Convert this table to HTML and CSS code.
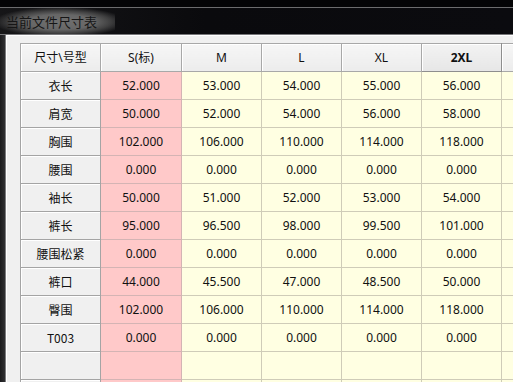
FILE: index.html
```html
<!DOCTYPE html>
<html lang="zh">
<head>
<meta charset="utf-8">
<link rel="stylesheet" href="styles.css">
</head>
<body>
<div class="window">
  <div class="frame-top"></div>
  <div class="titlebar"><span class="title">当前文件尺寸表</span></div>
  <div class="body">
    <div class="frame-left"></div>
    <div class="client">
      <table class="grid">
        <colgroup>
          <col class="c-first"><col class="c-s"><col class="c"><col class="c"><col class="c"><col class="c"><col class="c">
        </colgroup>
        <thead>
          <tr>
            <th>尺寸\号型</th><th>S(标)</th><th>M</th><th>L</th><th>XL</th><th class="sel">2XL</th><th></th>
          </tr>
        </thead>
        <tbody>
          <tr><th>衣长</th><td class="s">52.000</td><td>53.000</td><td>54.000</td><td>55.000</td><td>56.000</td><td></td></tr>
          <tr><th>肩宽</th><td class="s">50.000</td><td>52.000</td><td>54.000</td><td>56.000</td><td>58.000</td><td></td></tr>
          <tr><th>胸围</th><td class="s">102.000</td><td>106.000</td><td>110.000</td><td>114.000</td><td>118.000</td><td></td></tr>
          <tr><th>腰围</th><td class="s">0.000</td><td>0.000</td><td>0.000</td><td>0.000</td><td>0.000</td><td></td></tr>
          <tr><th>袖长</th><td class="s">50.000</td><td>51.000</td><td>52.000</td><td>53.000</td><td>54.000</td><td></td></tr>
          <tr><th>裤长</th><td class="s">95.000</td><td>96.500</td><td>98.000</td><td>99.500</td><td>101.000</td><td></td></tr>
          <tr><th>腰围松紧</th><td class="s">0.000</td><td>0.000</td><td>0.000</td><td>0.000</td><td>0.000</td><td></td></tr>
          <tr><th>裤口</th><td class="s">44.000</td><td>45.500</td><td>47.000</td><td>48.500</td><td>50.000</td><td></td></tr>
          <tr><th>臀围</th><td class="s">102.000</td><td>106.000</td><td>110.000</td><td>114.000</td><td>118.000</td><td></td></tr>
          <tr><th>T003</th><td class="s">0.000</td><td>0.000</td><td>0.000</td><td>0.000</td><td>0.000</td><td></td></tr>
          <tr><th></th><td class="s"></td><td></td><td></td><td></td><td></td><td></td></tr>
          <tr><th></th><td class="s"></td><td></td><td></td><td></td><td></td><td></td></tr>
        </tbody>
      </table>
    </div>
  </div>
</div>
</body>
</html>
```

FILE: styles.css
```css
html, body {
  margin: 0;
  padding: 0;
  width: 513px;
  height: 382px;
  overflow: hidden;
  background: #050507;
}

.window {
  display: flex;
  flex-direction: column;
  width: 513px;
  height: 382px;
}

.frame-top {
  height: 7px;
  background: #040406;
  border-bottom: 1px solid #6c6c6e;
  flex: none;
}

.titlebar {
  height: 26px;
  flex: none;
  background: linear-gradient(90deg, #161618 0%, #0a0a0d 40%, #0b0b0f 100%);
  border-bottom: 1px solid #77777a;
  display: flex;
  align-items: center;
  overflow: hidden;
}

.title {
  font-family: "Noto Sans CJK SC", sans-serif;
  font-size: 13px;
  line-height: 18px;
  color: #161616;
  padding: 6px 18px 6px 6px;
  margin-top: 1px;
  background: radial-gradient(closest-side, #707070 0%, #666666 50%, rgba(80,80,80,0.75) 75%, rgba(20,20,22,0) 100%);
  background-size: 116% 100%;
  background-position: 35% 50%;
  background-repeat: no-repeat;
}

.body {
  flex: 1;
  display: flex;
  min-height: 0;
}

.frame-left {
  width: 5px;
  flex: none;
  background: linear-gradient(90deg, #1a1a1c, #303032);
}

.client {
  flex: 1;
  background: #f0f0f0;
  border-left: 1px solid #7c7c7e;
  box-shadow: inset 1px 1px 0 #ffffff;
  padding: 8px 0 0 14px;
  overflow: hidden;
}

.grid {
  border-collapse: collapse;
  table-layout: fixed;
  width: 562px;
  font-family: "Noto Sans", "Noto Sans CJK SC", sans-serif;
  font-size: 12px;
  color: #111;
}

.c-first { width: 80px; }
.c-s { width: 81px; }
.c { width: 80px; }

.grid th,
.grid td {
  height: 27px;
  padding: 0;
  text-align: center;
  vertical-align: middle;
  border: 1px solid #b9b9b9;
  white-space: nowrap;
  line-height: 16px;
}

.grid thead th {
  background: linear-gradient(#f6f6f6, #ececec);
  font-weight: normal;
  border-color: #a8a8a8;
  box-shadow: inset 1px 1px 0 #ffffff;
}

.grid thead th.sel {
  font-weight: bold;
  background: linear-gradient(#f3f3f3, #e6e6e6);
  border-right-color: #8e8e8e;
  border-bottom-color: #8e8e8e;
}

.grid tbody th {
  font-weight: normal;
  font-family: "Noto Sans CJK SC", sans-serif;
  background: #f0f0f0;
  border-color: #a4a4a4;
  box-shadow: inset 1px 1px 0 #ffffff;
}

.grid tbody td {
  background: #ffffe2;
  border-color: #cfccb8;
}

.grid tbody td.s {
  background: #ffc9c9;
  border-color: #d4b4b4;
}
```
